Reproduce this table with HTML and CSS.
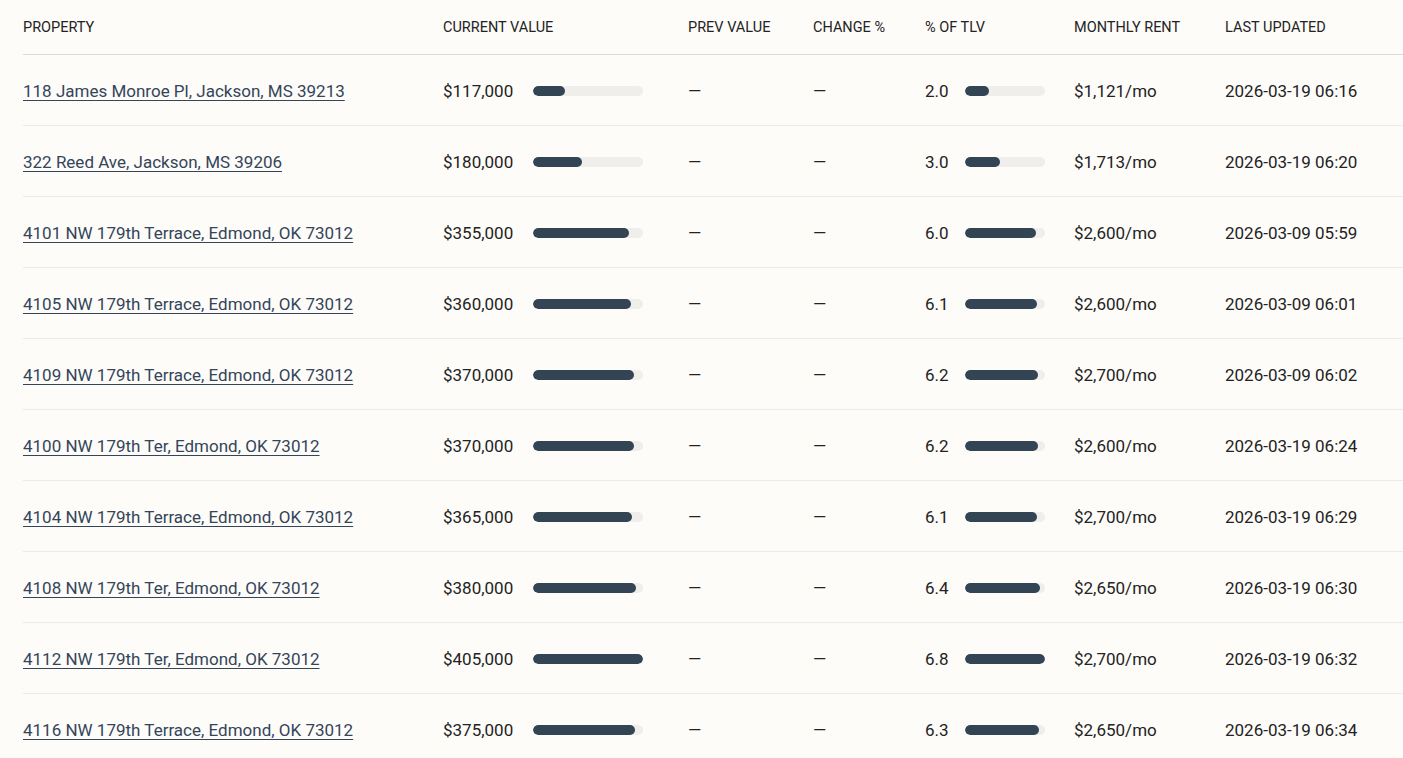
FILE: index.html
```html
<!DOCTYPE html>
<html lang="en">
<head>
<meta charset="utf-8">
<title>Properties</title>
<link rel="stylesheet" href="styles.css">
</head>
<body>
<div class="wrap">
<table class="props">
  <colgroup>
    <col class="c-prop"><col class="c-val"><col class="c-prev"><col class="c-chg"><col class="c-tlv"><col class="c-rent"><col class="c-upd">
  </colgroup>
  <thead>
    <tr><th>Property</th><th>Current Value</th><th>Prev Value</th><th>Change %</th><th>% of TLV</th><th>Monthly Rent</th><th>Last Updated</th></tr>
  </thead>
  <tbody>
    <tr><td><a href="#">118 James Monroe Pl, Jackson, MS 39213</a></td><td><div class="cell-bar"><span class="num">$117,000</span><span class="track"><span class="fill" style="width:28.9%"></span></span></div></td><td>—</td><td>—</td><td><div class="cell-bar"><span class="num tlv">2.0</span><span class="track sm"><span class="fill" style="width:29.4%"></span></span></div></td><td>$1,121/mo</td><td>2026-03-19 06:16</td></tr>
    <tr><td><a href="#">322 Reed Ave, Jackson, MS 39206</a></td><td><div class="cell-bar"><span class="num">$180,000</span><span class="track"><span class="fill" style="width:44.4%"></span></span></div></td><td>—</td><td>—</td><td><div class="cell-bar"><span class="num tlv">3.0</span><span class="track sm"><span class="fill" style="width:44.1%"></span></span></div></td><td>$1,713/mo</td><td>2026-03-19 06:20</td></tr>
    <tr><td><a href="#">4101 NW 179th Terrace, Edmond, OK 73012</a></td><td><div class="cell-bar"><span class="num">$355,000</span><span class="track"><span class="fill" style="width:87.7%"></span></span></div></td><td>—</td><td>—</td><td><div class="cell-bar"><span class="num tlv">6.0</span><span class="track sm"><span class="fill" style="width:88.2%"></span></span></div></td><td>$2,600/mo</td><td>2026-03-09 05:59</td></tr>
    <tr><td><a href="#">4105 NW 179th Terrace, Edmond, OK 73012</a></td><td><div class="cell-bar"><span class="num">$360,000</span><span class="track"><span class="fill" style="width:88.9%"></span></span></div></td><td>—</td><td>—</td><td><div class="cell-bar"><span class="num tlv">6.1</span><span class="track sm"><span class="fill" style="width:89.7%"></span></span></div></td><td>$2,600/mo</td><td>2026-03-09 06:01</td></tr>
    <tr><td><a href="#">4109 NW 179th Terrace, Edmond, OK 73012</a></td><td><div class="cell-bar"><span class="num">$370,000</span><span class="track"><span class="fill" style="width:91.4%"></span></span></div></td><td>—</td><td>—</td><td><div class="cell-bar"><span class="num tlv">6.2</span><span class="track sm"><span class="fill" style="width:91.2%"></span></span></div></td><td>$2,700/mo</td><td>2026-03-09 06:02</td></tr>
    <tr><td><a href="#">4100 NW 179th Ter, Edmond, OK 73012</a></td><td><div class="cell-bar"><span class="num">$370,000</span><span class="track"><span class="fill" style="width:91.4%"></span></span></div></td><td>—</td><td>—</td><td><div class="cell-bar"><span class="num tlv">6.2</span><span class="track sm"><span class="fill" style="width:91.2%"></span></span></div></td><td>$2,600/mo</td><td>2026-03-19 06:24</td></tr>
    <tr><td><a href="#">4104 NW 179th Terrace, Edmond, OK 73012</a></td><td><div class="cell-bar"><span class="num">$365,000</span><span class="track"><span class="fill" style="width:90.1%"></span></span></div></td><td>—</td><td>—</td><td><div class="cell-bar"><span class="num tlv">6.1</span><span class="track sm"><span class="fill" style="width:89.7%"></span></span></div></td><td>$2,700/mo</td><td>2026-03-19 06:29</td></tr>
    <tr><td><a href="#">4108 NW 179th Ter, Edmond, OK 73012</a></td><td><div class="cell-bar"><span class="num">$380,000</span><span class="track"><span class="fill" style="width:93.8%"></span></span></div></td><td>—</td><td>—</td><td><div class="cell-bar"><span class="num tlv">6.4</span><span class="track sm"><span class="fill" style="width:94.1%"></span></span></div></td><td>$2,650/mo</td><td>2026-03-19 06:30</td></tr>
    <tr><td><a href="#">4112 NW 179th Ter, Edmond, OK 73012</a></td><td><div class="cell-bar"><span class="num">$405,000</span><span class="track"><span class="fill" style="width:100%"></span></span></div></td><td>—</td><td>—</td><td><div class="cell-bar"><span class="num tlv">6.8</span><span class="track sm"><span class="fill" style="width:100%"></span></span></div></td><td>$2,700/mo</td><td>2026-03-19 06:32</td></tr>
    <tr><td><a href="#">4116 NW 179th Terrace, Edmond, OK 73012</a></td><td><div class="cell-bar"><span class="num">$375,000</span><span class="track"><span class="fill" style="width:92.6%"></span></span></div></td><td>—</td><td>—</td><td><div class="cell-bar"><span class="num tlv">6.3</span><span class="track sm"><span class="fill" style="width:92.6%"></span></span></div></td><td>$2,650/mo</td><td>2026-03-19 06:34</td></tr>
  </tbody>
</table>
</div>
</body>
</html>
```
FILE: styles.css
```css
html, body {
  margin: 0;
  padding: 0;
  background: #fdfcf9;
}
body {
  font-family: Roboto, "Liberation Sans", sans-serif;
  color: #232323;
  overflow: hidden;
}
.wrap {
  padding-left: 23px;
}
.props {
  border-collapse: collapse;
  table-layout: fixed;
  width: 1380px;
}
.c-prop { width: 420px; }
.c-val { width: 245px; }
.c-prev { width: 125px; }
.c-chg { width: 112px; }
.c-tlv { width: 149px; }
.c-rent { width: 151px; }
.c-upd { width: 178px; }
.props th {
  text-align: left;
  font-weight: 400;
  font-size: 14.5px;
  text-transform: uppercase;
  height: 54px;
  padding: 2px 0 0 0;
  border-bottom: 1px solid #d9d9d7;
  vertical-align: middle;
  line-height: 1;
  box-sizing: border-box;
}
.props td {
  font-size: 17px;
  height: 71px;
  padding: 2px 0 0 0;
  box-sizing: border-box;
  border-bottom: 1px solid #ecebe8;
  vertical-align: middle;
  white-space: nowrap;
}
.props a {
  color: #34455a;
  text-decoration: underline;
  text-decoration-thickness: 1px;
  text-underline-offset: 3px;
}
.cell-bar {
  display: flex;
  align-items: center;
}
.num {
  width: 90px;
  flex: none;
}
.num.tlv {
  width: 40px;
}
.track {
  display: block;
  width: 110px;
  height: 10px;
  border-radius: 5px;
  background: #efeeeb;
  overflow: hidden;
}
.track.sm {
  width: 80px;
}
.fill {
  display: block;
  height: 100%;
  border-radius: 5px;
  background: #334455;
}
```
